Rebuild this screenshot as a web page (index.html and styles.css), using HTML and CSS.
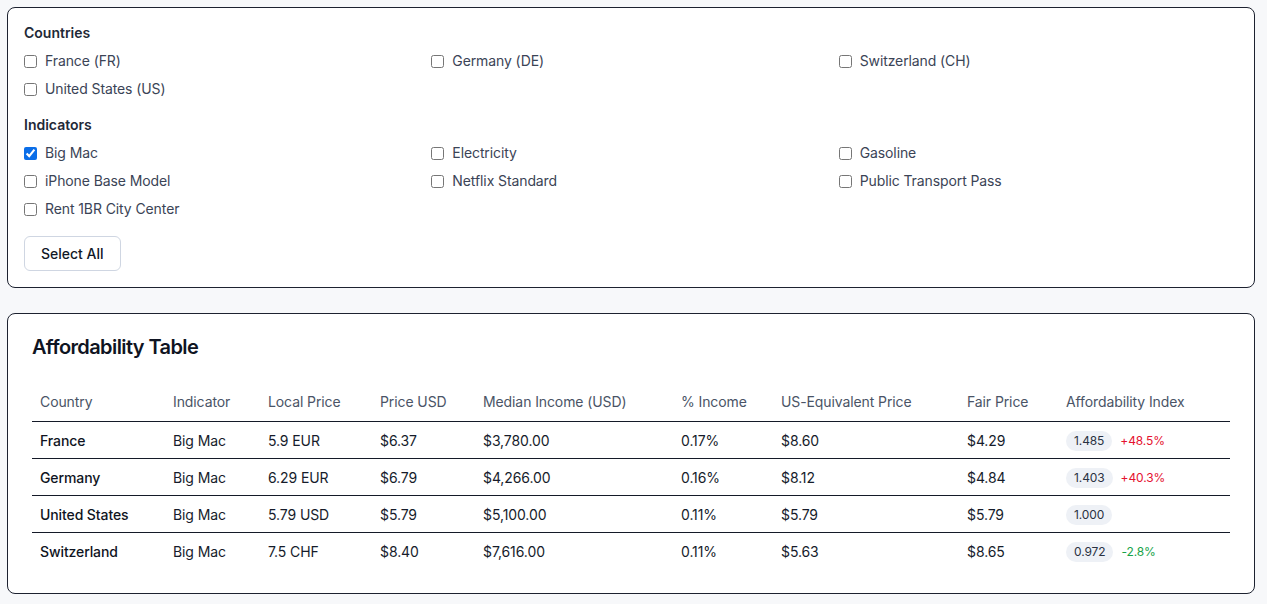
FILE: index.html
```html
<!DOCTYPE html>
<html lang="en">
<head>
<meta charset="utf-8">
<title>Affordability</title>
<link rel="stylesheet" href="styles.css">
</head>
<body>
<main class="page">
  <section class="card filters">
    <div class="group">
      <h3 class="group-title">Countries</h3>
      <div class="options">
        <label class="opt"><input type="checkbox"><span>France (FR)</span></label>
        <label class="opt"><input type="checkbox"><span>Germany (DE)</span></label>
        <label class="opt"><input type="checkbox"><span>Switzerland (CH)</span></label>
        <label class="opt"><input type="checkbox"><span>United States (US)</span></label>
      </div>
    </div>
    <div class="group">
      <h3 class="group-title">Indicators</h3>
      <div class="options">
        <label class="opt"><input type="checkbox" checked><span>Big Mac</span></label>
        <label class="opt"><input type="checkbox"><span>Electricity</span></label>
        <label class="opt"><input type="checkbox"><span>Gasoline</span></label>
        <label class="opt"><input type="checkbox"><span>iPhone Base Model</span></label>
        <label class="opt"><input type="checkbox"><span>Netflix Standard</span></label>
        <label class="opt"><input type="checkbox"><span>Public Transport Pass</span></label>
        <label class="opt"><input type="checkbox"><span>Rent 1BR City Center</span></label>
      </div>
    </div>
    <button class="btn" type="button">Select All</button>
  </section>

  <section class="card table-card">
    <h2 class="title">Affordability Table</h2>
    <table class="tbl">
      <colgroup>
        <col class="c1"><col class="c2"><col class="c3"><col class="c4"><col class="c5"><col class="c6"><col class="c7"><col class="c8"><col class="c9">
      </colgroup>
      <thead>
        <tr>
          <th>Country</th><th>Indicator</th><th>Local Price</th><th>Price USD</th><th>Median Income (USD)</th><th>% Income</th><th>US-Equivalent Price</th><th>Fair Price</th><th>Affordability Index</th>
        </tr>
      </thead>
      <tbody>
        <tr>
          <td class="country">France</td><td>Big Mac</td><td>5.9 EUR</td><td>$6.37</td><td>$3,780.00</td><td>0.17%</td><td>$8.60</td><td>$4.29</td>
          <td><span class="pill">1.485</span><span class="delta up">+48.5%</span></td>
        </tr>
        <tr>
          <td class="country">Germany</td><td>Big Mac</td><td>6.29 EUR</td><td>$6.79</td><td>$4,266.00</td><td>0.16%</td><td>$8.12</td><td>$4.84</td>
          <td><span class="pill">1.403</span><span class="delta up">+40.3%</span></td>
        </tr>
        <tr>
          <td class="country">United States</td><td>Big Mac</td><td>5.79 USD</td><td>$5.79</td><td>$5,100.00</td><td>0.11%</td><td>$5.79</td><td>$5.79</td>
          <td><span class="pill">1.000</span></td>
        </tr>
        <tr>
          <td class="country">Switzerland</td><td>Big Mac</td><td>7.5 CHF</td><td>$8.40</td><td>$7,616.00</td><td>0.11%</td><td>$5.63</td><td>$8.65</td>
          <td><span class="pill">0.972</span><span class="delta down">-2.8%</span></td>
        </tr>
      </tbody>
    </table>
  </section>
</main>
</body>
</html>
```

FILE: styles.css
```css
* { box-sizing: border-box; }
html, body { margin: 0; padding: 0; }
body {
  background: #f7f8fa;
  font-family: Inter, "Noto Sans", "Liberation Sans", sans-serif;
  font-size: 14px;
  color: #111827;
}
.page {
  padding: 7px 12px 0 7px;
  display: flex;
  flex-direction: column;
  gap: 25px;
}
.card {
  background: #fff;
  border: 1px solid #1d2230;
  border-radius: 8px;
}
.filters {
  padding: 16px;
  display: flex;
  flex-direction: column;
  align-items: flex-start;
}
.group { width: 100%; margin-bottom: 17px; }
.group-title {
  margin: 0 0 9px;
  font-size: 14px;
  line-height: 18px;
  font-weight: 600;
  color: #1f2937;
}
.options {
  display: grid;
  grid-template-columns: repeat(3, 1fr);
  column-gap: 8px;
  row-gap: 8px;
}
.opt {
  display: flex;
  align-items: center;
  gap: 8px;
  height: 20px;
  color: #3b4456;
  line-height: 20px;
  letter-spacing: -0.1px;
}
.opt input {
  margin: 0;
  width: 13px;
  height: 13px;
  accent-color: #0b6ee8;
}
.btn {
  font: inherit;
  font-weight: 500;
  color: #111827;
  background: #fff;
  border: 1px solid #cfd6e2;
  border-radius: 6px;
  height: 35px;
  padding: 0 16px;
  margin: 0;
}
.table-card { padding: 24px 24px 23px; }
.title {
  margin: 0 0 25px;
  font-size: 20px;
  line-height: 18px;
  font-weight: 600;
  color: #0f1422;
  letter-spacing: -0.6px;
}
.tbl {
  width: 100%;
  border-collapse: collapse;
  table-layout: fixed;
}
.c1 { width: 133px; }
.c2 { width: 95px; }
.c3 { width: 112px; }
.c4 { width: 103px; }
.c5 { width: 198px; }
.c6 { width: 100px; }
.c7 { width: 186px; }
.c8 { width: 99px; }
.c9 { width: auto; }
.tbl th {
  text-align: left;
  font-weight: 400;
  color: #4a5466;
  padding: 11px 8px 9px;
  line-height: 20px;
  border-bottom: 1px solid #141a28;
  letter-spacing: -0.1px;
}
.tbl td {
  padding: 9px 8px 7px;
  height: 37px;
  line-height: 20px;
  color: #161c2b;
  border-top: 1px solid #141a28;
  letter-spacing: -0.1px;
  vertical-align: middle;
}
.tbl tbody tr:first-child td { border-top: none; }
.tbl td.country { font-weight: 500; color: #0f1422; }
.pill {
  display: inline-block;
  vertical-align: top;
  background: #eef1f6;
  border-radius: 10px;
  padding: 0 8px;
  font-size: 12px;
  line-height: 20px;
  color: #2a3142;
}
.delta {
  display: inline-block;
  vertical-align: top;
  font-size: 12px;
  line-height: 20px;
  margin-left: 8px;
}
.delta.up { color: #e5122f; }
.delta.down { color: #17a34a; }
```
